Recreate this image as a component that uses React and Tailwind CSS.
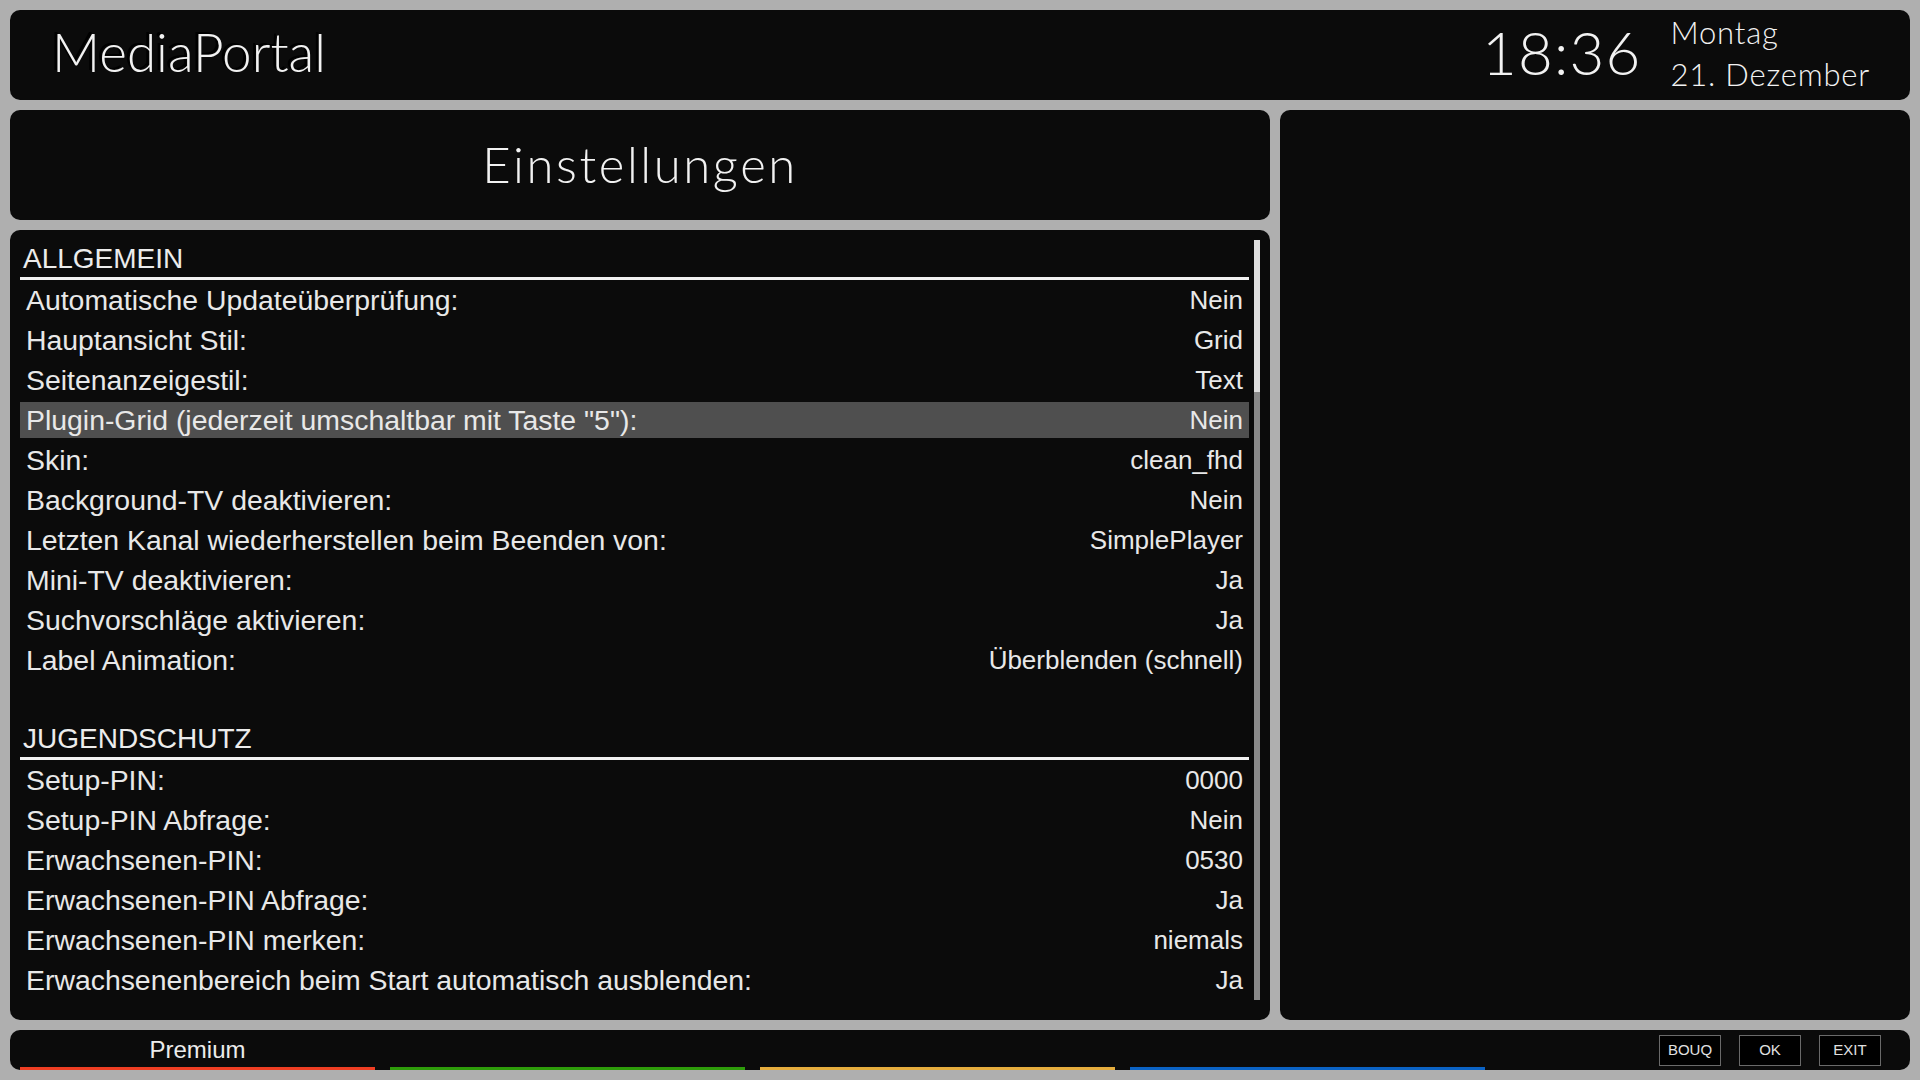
import React from 'react';

const allgemein = [
  ['Automatische Updateüberprüfung:', 'Nein'],
  ['Hauptansicht Stil:', 'Grid'],
  ['Seitenanzeigestil:', 'Text'],
  ['Plugin-Grid (jederzeit umschaltbar mit Taste "5"):', 'Nein', true],
  ['Skin:', 'clean_fhd'],
  ['Background-TV deaktivieren:', 'Nein'],
  ['Letzten Kanal wiederherstellen beim Beenden von:', 'SimplePlayer'],
  ['Mini-TV deaktivieren:', 'Ja'],
  ['Suchvorschläge aktivieren:', 'Ja'],
  ['Label Animation:', 'Überblenden (schnell)'],
];

const jugendschutz = [
  ['Setup-PIN:', '0000'],
  ['Setup-PIN Abfrage:', 'Nein'],
  ['Erwachsenen-PIN:', '0530'],
  ['Erwachsenen-PIN Abfrage:', 'Ja'],
  ['Erwachsenen-PIN merken:', 'niemals'],
  ['Erwachsenenbereich beim Start automatisch ausblenden:', 'Ja'],
];

const colorKeys = [
  { label: 'Premium', bar: 'bg-[#ef3e23]' },
  { label: '', bar: 'bg-[#2e9c0a]' },
  { label: '', bar: 'bg-[#e5ad3e]' },
  { label: '', bar: 'bg-[#0b63c5]' },
];

function SectionHeader({ title }) {
  return (
    <div className="h-[40px] flex items-center border-b-[3px] border-[#f2f2f2] pl-[3px] text-[28px] text-[#ececec]">
      {title}
    </div>
  );
}

function Row({ label, value, selected }) {
  return (
    <div className="h-[40px] py-[2px]">
      <div
        className={`h-full flex items-center justify-between px-[6px] text-[#e8e8e8] ${
          selected ? 'bg-[#4f4f4f]' : ''
        }`}
      >
        <span className="text-[28.4px]">{label}</span>
        <span className="text-[26px]">{value}</span>
      </div>
    </div>
  );
}

export default function App() {
  return (
    <div className="w-[1920px] h-[1080px] bg-[#afafaf] p-[10px] flex flex-col gap-[10px] overflow-hidden font-['Liberation_Sans',Arial,sans-serif]">
      {/* Header */}
      <div className="h-[90px] shrink-0 bg-[#0b0b0b] rounded-[10px] flex items-start px-[42px] font-['Lato',sans-serif] font-light text-[#f2f2f2]">
        <div className="mt-[10px] text-[53px] leading-[64px] [text-shadow:_-3px_-2px_0_#000]">MediaPortal</div>
        <div className="ml-auto mt-[6px] text-[60px] leading-[72px] tracking-[1.2px]">18:36</div>
        <div className="ml-[29px] mr-[-2px] mt-[1px] text-[31px] leading-[42px] tracking-[0.8px]">
          <div>Montag</div>
          <div>21. Dezember</div>
        </div>
      </div>

      {/* Main */}
      <div className="h-[910px] shrink-0 flex gap-[10px]">
        <div className="w-[1260px] flex flex-col gap-[10px]">
          <div className="h-[110px] shrink-0 bg-[#0b0b0b] rounded-[10px] flex items-center justify-center">
            <div className="font-['Lato',sans-serif] font-light text-[49px] tracking-[2.6px] text-[#f2f2f2] -mt-[1px]">Einstellungen</div>
          </div>

          <div className="flex-1 bg-[#0b0b0b] rounded-[10px] pt-[10px] pb-[20px] pl-[10px] pr-[10px] flex gap-[5px]">
            <div className="flex-1">
              <SectionHeader title="ALLGEMEIN" />
              {allgemein.map(([l, v, s]) => (
                <Row key={l} label={l} value={v} selected={s} />
              ))}
              <div className="h-[40px]" />
              <SectionHeader title="JUGENDSCHUTZ" />
              {jugendschutz.map(([l, v]) => (
                <Row key={l} label={l} value={v} />
              ))}
            </div>
            {/* scrollbar */}
            <div className="w-[6px] flex flex-col bg-[#8a8a8a]">
              <div className="h-[152px] bg-[#dedede]" />
            </div>
          </div>
        </div>

        <div className="flex-1 bg-[#0b0b0b] rounded-[10px]" />
      </div>

      {/* Footer */}
      <div className="h-[40px] shrink-0 bg-[#0b0b0b] rounded-[10px] flex items-stretch pl-[10px] pr-[29px]">
        <div className="flex gap-[15px]">
          {colorKeys.map((k, i) => (
            <div key={i} className="w-[355px] flex flex-col justify-between">
              <div className="pt-[6px] text-center text-[24px] leading-[28px] text-[#ececec]">{k.label}</div>
              <div className={`h-[3px] ${k.bar}`} />
            </div>
          ))}
        </div>
        <div className="ml-auto flex items-center gap-[18px]">
          {['BOUQ', 'OK', 'EXIT'].map((b) => (
            <div
              key={b}
              className="w-[62px] h-[31px] bg-black border border-[#6a6a6a] flex items-center justify-center text-[15px] text-[#e0e0e0]"
            >
              {b}
            </div>
          ))}
        </div>
      </div>
    </div>
  );
}
